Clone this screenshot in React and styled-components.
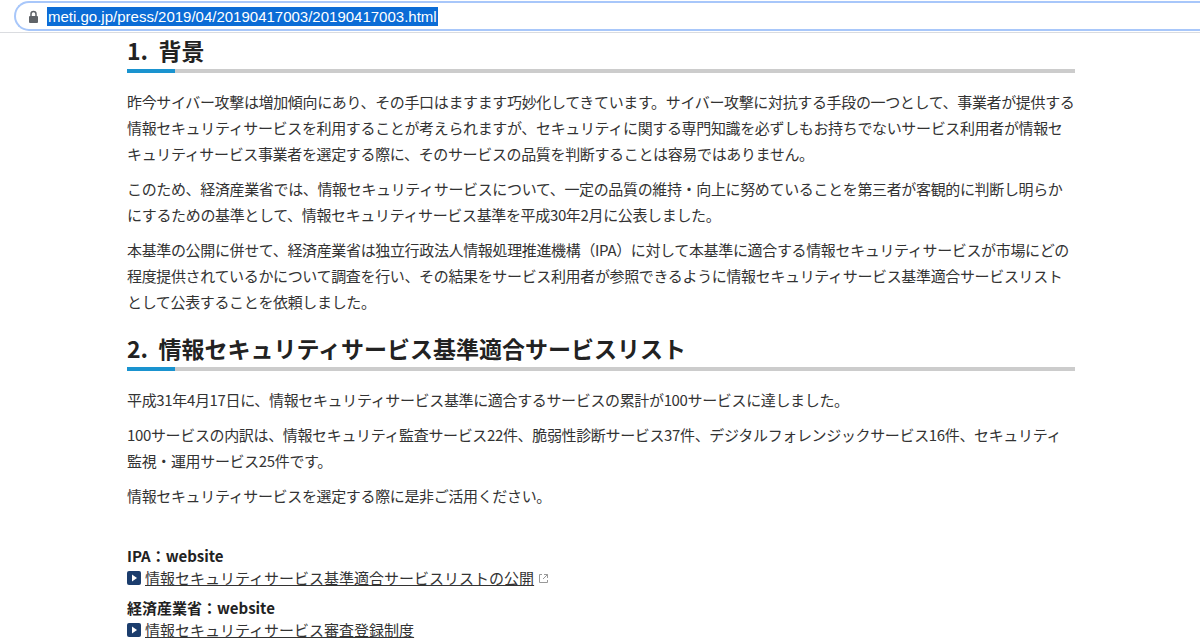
import React from 'react';
import styled, { createGlobalStyle } from 'styled-components';

const Global = createGlobalStyle`
  body { margin: 0; background: #fff; font-family: "Noto Sans CJK JP", "Noto Sans", sans-serif; color: #333; overflow: hidden; }
`;

const AddressBar = styled.div`
  height: 32px;
  border-bottom: 1px solid #dadce0;
  display: flex;
  align-items: center;
  padding-left: 14px;
`;

const Omnibox = styled.div`
  flex: 1;
  height: 26px;
  border: 2px solid #a8c7fa;
  border-right: none;
  border-radius: 15px 0 0 15px;
  display: flex;
  align-items: center;
  padding-left: 12px;
  gap: 8px;
`;

const Url = styled.span`
  background: #0b6cd6;
  color: #fff;
  font-family: "Liberation Sans", Arial, sans-serif;
  font-size: 15px;
  padding: 1px 1px;
`;

const Main = styled.main`
  width: 948px;
  margin: 0 auto 0 127px;
`;

const Heading = styled.h2`
  margin: 0;
  padding-top: ${(p) => p.$top}px;
  font-size: 23px;
  font-weight: 700;
  color: #222;
  line-height: 30px;
  background: linear-gradient(to right, #1a93cf 48px, #cccccc 48px) bottom / 100% 4px no-repeat;
  padding-bottom: 8px;
`;

const Para = styled.p`
  margin: ${(p) => p.$first ? 16 : 9}px 0 0;
  font-size: 15px;
  line-height: 26px;
  letter-spacing: -0.35px;
`;

const Label = styled.div`
  font-size: 15px;
  font-weight: 700;
  line-height: 22px;
  color: #222;
  margin-top: ${(p) => p.$top}px;
`;

const LinkRow = styled.div`
  display: flex;
  align-items: center;
  gap: 4px;
  font-size: 15px;
  line-height: 22px;
`;

const Link = styled.a`
  color: #333;
  text-decoration: underline;
`;

const Play = () => (
  <svg width="14" height="14" viewBox="0 0 14 14">
    <rect width="14" height="14" rx="2" fill="#1b3d6d" />
    <path d="M5 3.5 L10 7 L5 10.5 Z" fill="#fff" />
  </svg>
);

const Ext = () => (
  <svg width="11" height="11" viewBox="0 0 11 11" fill="none" stroke="#999" strokeWidth="1">
    <path d="M4 1.5H1.5v8h8V7" />
    <path d="M6 1.5h3.5V5M9.5 1.5L5 6" />
  </svg>
);

const Lock = () => (
  <svg width="11" height="13" viewBox="0 0 11 13">
    <path d="M3 6V4a2.5 2.5 0 015 0v2" fill="none" stroke="#5f6368" strokeWidth="1.5" />
    <rect x="1" y="6" width="9" height="7" rx="1" fill="#5f6368" />
  </svg>
);

export default function App() {
  return (
    <>
      <Global />
      <AddressBar>
        <Omnibox>
          <Lock />
          <Url>meti.go.jp/press/2019/04/20190417003/20190417003.html</Url>
        </Omnibox>
      </AddressBar>
      <Main>
        <Heading $top={2}>1.&nbsp;&nbsp;背景</Heading>
        <Para $first>昨今サイバー攻撃は増加傾向にあり、その手口はますます巧妙化してきています。サイバー攻撃に対抗する手段の一つとして、事業者が提供する情報セキュリティサービスを利用することが考えられますが、セキュリティに関する専門知識を必ずしもお持ちでないサービス利用者が情報セキュリティサービス事業者を選定する際に、そのサービスの品質を判断することは容易ではありません。</Para>
        <Para>このため、経済産業省では、情報セキュリティサービスについて、一定の品質の維持・向上に努めていることを第三者が客観的に判断し明らかにするための基準として、情報セキュリティサービス基準を平成30年2月に公表しました。</Para>
        <Para>本基準の公開に併せて、経済産業省は独立行政法人情報処理推進機構（IPA）に対して本基準に適合する情報セキュリティサービスが市場にどの程度提供されているかについて調査を行い、その結果をサービス利用者が参照できるように情報セキュリティサービス基準適合サービスリストとして公表することを依頼しました。</Para>
        <Heading $top={18}>2.&nbsp;&nbsp;情報セキュリティサービス基準適合サービスリスト</Heading>
        <Para $first>平成31年4月17日に、情報セキュリティサービス基準に適合するサービスの累計が100サービスに達しました。</Para>
        <Para>100サービスの内訳は、情報セキュリティ監査サービス22件、脆弱性診断サービス37件、デジタルフォレンジックサービス16件、セキュリティ監視・運用サービス25件です。</Para>
        <Para>情報セキュリティサービスを選定する際に是非ご活用ください。</Para>
        <Label $top={36}>IPA：website</Label>
        <LinkRow><Play /><Link href="#">情報セキュリティサービス基準適合サービスリストの公開</Link><Ext /></LinkRow>
        <Label $top={8}>経済産業省：website</Label>
        <LinkRow><Play /><Link href="#">情報セキュリティサービス審査登録制度</Link></LinkRow>
      </Main>
    </>
  );
}
